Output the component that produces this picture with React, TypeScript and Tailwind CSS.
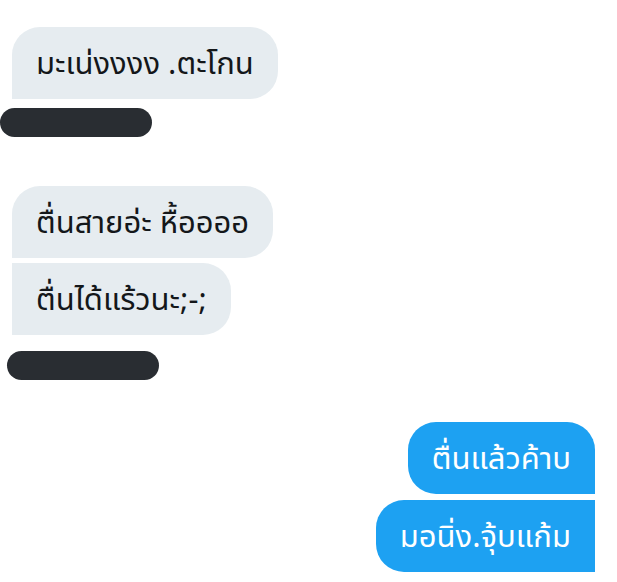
const font = { fontFamily: '"Noto Sans Thai", "Noto Sans", "Liberation Sans", sans-serif' };

type Side = "in" | "out";

function Bubble({ text, side, className }: { text: string; side: Side; className: string }) {
  const tone = side === "in" ? "bg-[#e6ecf0] text-[#14171a]" : "bg-[#1da1f2] text-white";
  return (
    <div className={`flex h-[72px] items-center rounded-[28px] px-6 text-[31px] leading-none ${tone} ${className}`}>
      <span className="pt-[3px]">{text}</span>
    </div>
  );
}

function Redacted({ className }: { className: string }) {
  return <div className={`h-[29px] w-[152px] rounded-full bg-[#292d32] ${className}`} />;
}

export default function App() {
  return (
    <div className="min-h-[582px] w-[617px] bg-white pt-[27px]" style={font}>
      <div className="flex flex-col items-start">
        <Bubble side="in" text="มะเน่งงงง .ตะโกน" className="ml-[12px] rounded-bl-none" />
        <Redacted className="mt-[9px]" />

        <Bubble side="in" text="ตื่นสายอ่ะ หื้ออออ" className="ml-[12px] mt-[49px] rounded-bl-none" />
        <Bubble side="in" text="ตื่นได้แร้วนะ;-;" className="ml-[12px] mt-[5px] rounded-bl-none rounded-tl-none" />
        <Redacted className="ml-[7px] mt-[16px]" />
      </div>

      <div className="mt-[42px] flex flex-col items-end pr-[22px]">
        <Bubble side="out" text="ตื่นแล้วค้าบ" className="rounded-br-none" />
        <Bubble side="out" text="มอนิ่ง.จุ้บแก้ม" className="mt-[6px] rounded-br-none rounded-tr-none" />
      </div>
    </div>
  );
}
